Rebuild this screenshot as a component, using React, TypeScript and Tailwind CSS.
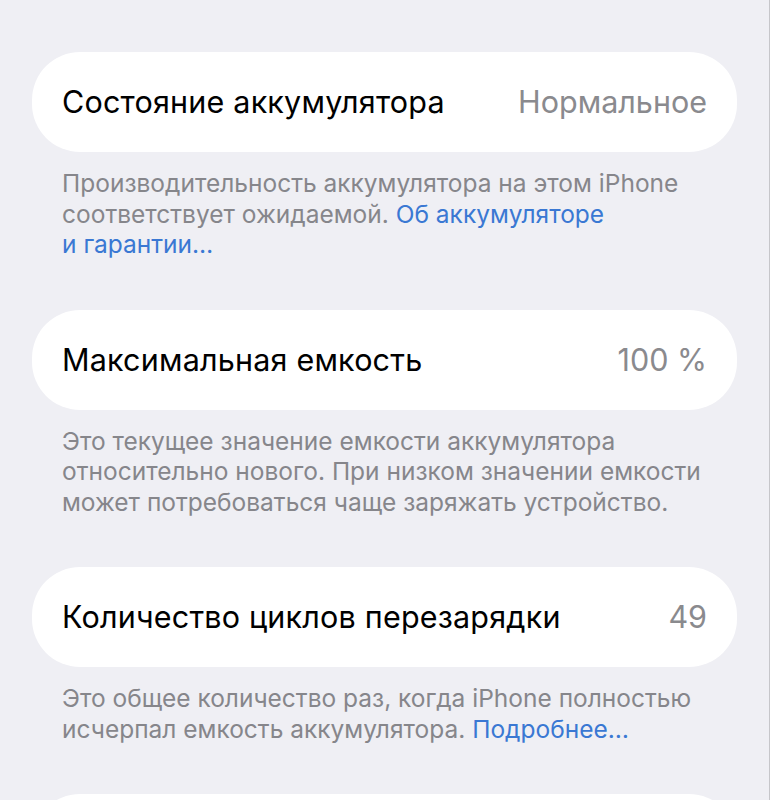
import type { ReactNode } from "react";

interface BatteryRowProps {
    title: string;
    value: string;
    children: ReactNode;
}

function BatteryRow({ title, value, children }: BatteryRowProps) {
    return (
        <div className="mb-[50px]">
            <div className="mx-[32px] h-[100px] rounded-[48px] bg-white flex items-center justify-between pl-[30px] pr-[30px]">
                <span className="text-[30.5px] text-black tracking-[0.2px]">{title}</span>
                <span className="text-[30.5px] text-[#8a8a8e]">{value}</span>
            </div>
            <p className="mt-[16px] pl-[62px] pr-[40px] text-[24.5px] leading-[30.5px] text-[#86868b]">{children}</p>
        </div>
    );
}

export default function App() {
    return (
        <div
            className="h-[800px] w-[770px] bg-[#efeff4] pt-[52px] border-r border-[#c6c6ca] overflow-hidden"
            style={{ fontFamily: "Inter, 'Noto Sans', sans-serif" }}
        >
            <BatteryRow title="Состояние аккумулятора" value="Нормальное">
                Производительность аккумулятора на этом iPhone соответствует ожидаемой.{" "}
                <span className="text-[#3a78d3]">Об аккумуляторе и{"\u00A0"}гарантии…</span>
            </BatteryRow>
            <BatteryRow title="Максимальная емкость" value="100 %">
                Это текущее значение емкости аккумулятора относительно нового. При низком значении емкости может
                потребоваться чаще заряжать устройство.
            </BatteryRow>
            <BatteryRow title="Количество циклов перезарядки" value="49">
                Это общее количество раз, когда iPhone полностью исчерпал емкость аккумулятора.{" "}
                <span className="text-[#3a78d3]">Подробнее…</span>
            </BatteryRow>
            <div className="mx-[32px] h-[100px] rounded-[48px] bg-white" />
        </div>
    );
}
